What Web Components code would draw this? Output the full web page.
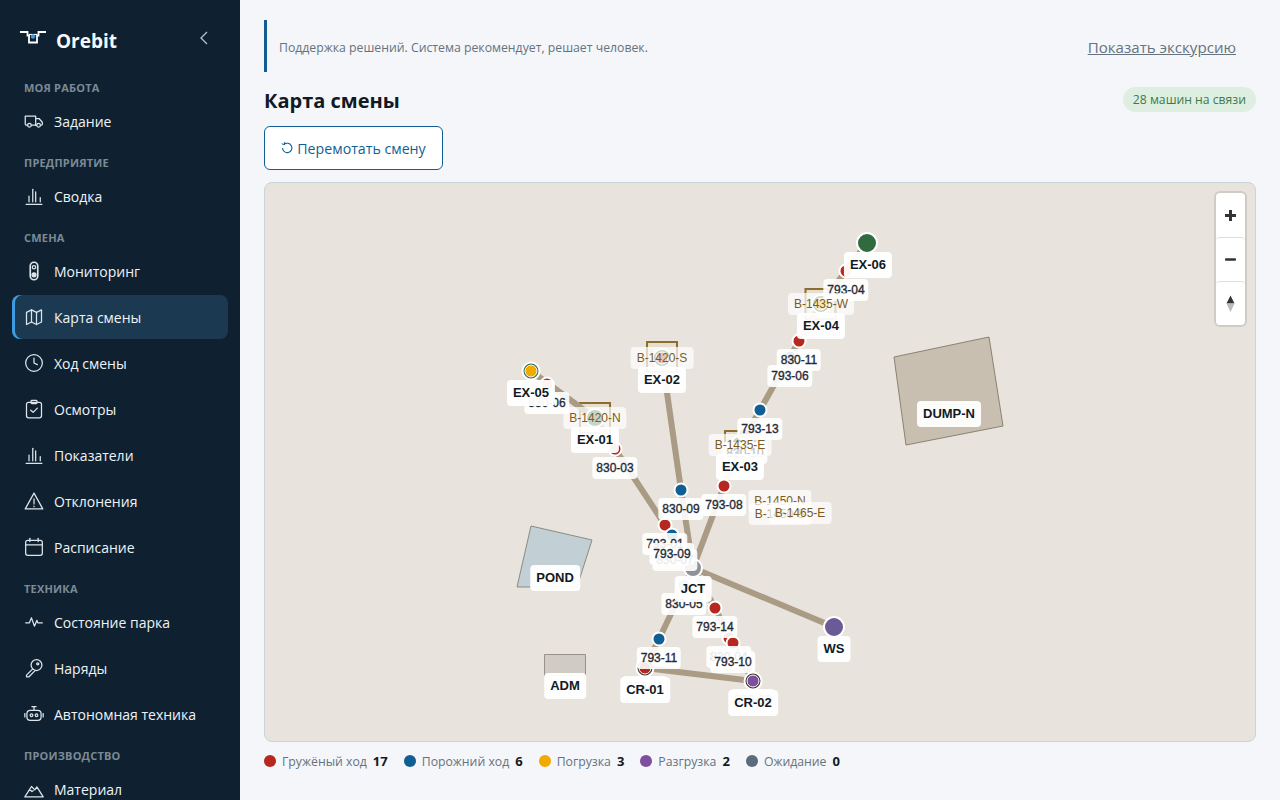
<!DOCTYPE html>
<html lang="ru">
<head>
<meta charset="utf-8">
<title>Карта смены</title>
<style>
html, body { margin: 0; height: 100%; overflow: hidden; }
body { font-family: "Open Sans", "Noto Sans", sans-serif; background: #f4f6f9; }
</style>
</head>
<body>
<shift-app>
  <app-sidebar slot="sidebar">
    <nav-section label="Моя работа"></nav-section>
    <nav-item icon="truck">Задание</nav-item>
    <nav-section label="Предприятие"></nav-section>
    <nav-item icon="chart">Сводка</nav-item>
    <nav-section label="Смена"></nav-section>
    <nav-item icon="monitor">Мониторинг</nav-item>
    <nav-item icon="map" active>Карта смены</nav-item>
    <nav-item icon="clock">Ход смены</nav-item>
    <nav-item icon="clipboard">Осмотры</nav-item>
    <nav-item icon="chart">Показатели</nav-item>
    <nav-item icon="warning">Отклонения</nav-item>
    <nav-item icon="calendar">Расписание</nav-item>
    <nav-section label="Техника"></nav-section>
    <nav-item icon="activity">Состояние парка</nav-item>
    <nav-item icon="key">Наряды</nav-item>
    <nav-item icon="robot">Автономная техника</nav-item>
    <nav-section label="Производство"></nav-section>
    <nav-item icon="mountain">Материал</nav-item>
  </app-sidebar>

  <info-banner>
    Поддержка решений. Система рекомендует, решает человек.
    <a slot="action" href="#">Показать экскурсию</a>
  </info-banner>
  <page-header badge="28 машин на связи">Карта смены</page-header>
  <rewind-button>Перемотать смену</rewind-button>
  <shift-map></shift-map>
  <map-legend>
    <legend-item color="#b5271f" count="17">Гружёный ход</legend-item>
    <legend-item color="#0f5f95" count="6">Порожний ход</legend-item>
    <legend-item color="#f2a900" count="3">Погрузка</legend-item>
    <legend-item color="#7d4f9e" count="2">Разгрузка</legend-item>
    <legend-item color="#5b6b7b" count="0">Ожидание</legend-item>
  </map-legend>
</shift-app>

<script>
const ICONS = {
  truck: '<path d="M4.5 17H3a1.5 1.5 0 0 1-1.5-1.5V6h12.5v11"/><path d="M9 17h6"/><path d="M14 9h4l4 4.5V16a1 1 0 0 1-1 1h-.5"/><circle cx="6.5" cy="17" r="2.2"/><circle cx="17.5" cy="17" r="2.2"/>',
  chart: '<path d="M2.5 22h19"/><path d="M6 19v-7"/><path d="M10.5 19V4"/><path d="M14 19V7"/><path d="M19.5 19v-5"/>',
  monitor: '<rect x="7.5" y="1.5" width="9" height="21" rx="4.5" stroke-width="2"/><circle cx="12" cy="7.5" r="2"/><circle cx="12" cy="16.5" r="2.4" fill="currentColor"/>',
  map: '<path d="M9 3.5 3 6.5V21l6-3 6 3 6-3V3.500l-6 3z"/><path d="M9 3.500V18"/><path d="M15 6.500V21"/>',
  clock: '<circle cx="12" cy="12" r="10"/><path d="M12 6v6l4 2"/>',
  clipboard: '<rect x="3" y="4" width="18" height="18.500" rx="2.500"/><rect x="8.500" y="1.500" width="7" height="4" rx="1"/><path d="m8 13.500 3 2.500 5-5"/>',
  warning: '<path d="M12 2.500 1.500 21.500h21z"/><path d="M12 9.500v6"/><path d="M12 18v.8"/>',
  calendar: '<rect x="2" y="4" width="20" height="18" rx="2.500"/><path d="M2 9.500h20"/><path d="M7 1.500v4"/><path d="M17 1.500v4"/>',
  activity: '<path d="M2 13h4.500l2.500-6 3.500 10 3-7 1 3h5.500"/>',
  key: '<circle cx="15" cy="8.500" r="6.500"/><circle cx="16.500" cy="7" r="1.300"/><path d="M10.500 13 3 20.500V22.500h3L13 15.500"/>',
  robot: '<rect x="3.500" y="7.500" width="17" height="12" rx="4"/><circle cx="9" cy="13.500" r="1.600"/><circle cx="15" cy="13.500" r="1.600"/><path d="M12 7.500V3.500"/><path d="M9.500 3h5"/><path d="M1 11.500v4"/><path d="M23 11.500v4"/>',
  mountain: '<path d="M1 21.500 9 9l4 4 2.500-3.500 7.500 12z"/><path d="M6 13.500h2l1.500 1.500 1.500-1"/>'
};

const appTemplate = document.createElement('template');
appTemplate.innerHTML = `
<style>
:host { display: flex; height: 800px; overflow: hidden; }
main { flex: 1; min-width: 0; padding: 20px 24px 0; display: flex; flex-direction: column; align-items: stretch; }
</style>
<slot name="sidebar"></slot>
<main><slot></slot></main>
`;
class ShiftApp extends HTMLElement {
  constructor() {
    super();
    this.attachShadow({ mode: 'open' });
    this.shadowRoot.appendChild(appTemplate.content.cloneNode(true));
  }
}
customElements.define('shift-app', ShiftApp);

const sidebarTemplate = document.createElement('template');
sidebarTemplate.innerHTML = `
<style>
:host { display: block; flex: 0 0 240px; width: 240px; height: 800px; background: #0f2130; overflow: hidden; color: #fff; }
header { height: 70px; box-sizing: border-box; position: relative; display: flex; align-items: flex-start; padding: 30px 30px 0 20px; }
.logo { width: 26px; height: 14px; margin-right: 10px; }
.name { font-size: 19px; line-height: 22px; font-weight: 700; color: #f4f8fb; flex: 1; }
.chev { width: 12px; height: 14px; margin: 1px 0 0; color: #b6c2cc; }
nav { padding: 0 12px; }
</style>
<header>
  <svg class="logo" viewBox="0 0 26 14" fill="none" stroke="#fff" stroke-width="1.800">
    <path d="M0 2h7.500v3.500h1.500V12.500h8V5.500h1.500V2H26"/>
    <path d="M9 4.500h8" stroke-width="1.200"/>
    <circle cx="13" cy="6.500" r="2.200" fill="#3f9be0" stroke="none"/>
  </svg>
  <span class="name">Orebit</span>
  <svg class="chev" viewBox="0 0 12 14" fill="none" stroke="currentColor" stroke-width="1.300"><path d="M9 1 3 7l6 6"/></svg>
</header>
<nav><slot></slot></nav>
`;
class AppSidebar extends HTMLElement {
  constructor() {
    super();
    this.attachShadow({ mode: 'open' });
    this.shadowRoot.appendChild(sidebarTemplate.content.cloneNode(true));
  }
}
customElements.define('app-sidebar', AppSidebar);

class NavSection extends HTMLElement {
  constructor() {
    super();
    this.attachShadow({ mode: 'open' });
    this.shadowRoot.innerHTML = `
<style>
:host { display: block; height: 29px; box-sizing: border-box; padding: 11px 12px 0; font-size: 11px; line-height: 14px; font-weight: 700; letter-spacing: .2px; text-transform: uppercase; color: #7b8a97; }
</style>
<span></span>`;
  }
  connectedCallback() {
    this.shadowRoot.querySelector('span').textContent = this.getAttribute('label');
  }
}
customElements.define('nav-section', NavSection);

class NavItem extends HTMLElement {
  constructor() {
    super();
    this.attachShadow({ mode: 'open' });
    this.shadowRoot.innerHTML = `
<style>
:host { display: flex; align-items: center; height: 44px; margin-bottom: 2px; box-sizing: border-box; padding: 0 12px; gap: 10px; font-size: 14px; color: #eef3f7; border-radius: 8px; }
:host([active]) { background: #1b3a52; box-shadow: inset 3px 0 0 #3f9be0; }
svg { width: 20px; height: 20px; flex: none; fill: none; stroke: currentColor; stroke-width: 1.5; stroke-linecap: round; stroke-linejoin: round; color: #dde5eb; }
</style>
<svg viewBox="0 0 24 24"></svg><slot></slot>`;
  }
  connectedCallback() {
    this.shadowRoot.querySelector('svg').innerHTML = ICONS[this.getAttribute('icon')] || '';
  }
}
customElements.define('nav-item', NavItem);

class InfoBanner extends HTMLElement {
  constructor() {
    super();
    this.attachShadow({ mode: 'open' });
    this.shadowRoot.innerHTML = `
<style>
:host { display: flex; align-items: center; justify-content: space-between; height: 52px; box-sizing: border-box; padding: 2px 20px 0 12px; border-left: 3px solid #0f5f95; font-size: 12.250px; color: #66727e; }
::slotted(a) { font-size: 15.100px; color: #66727e; text-decoration: underline; }
</style>
<span><slot></slot></span><slot name="action"></slot>`;
  }
}
customElements.define('info-banner', InfoBanner);

class PageHeader extends HTMLElement {
  constructor() {
    super();
    this.attachShadow({ mode: 'open' });
    this.shadowRoot.innerHTML = `
<style>
:host { display: flex; align-items: center; justify-content: space-between; height: 54px; box-sizing: border-box; padding-top: 3px; }
h1 { margin: 0; font-size: 20px; line-height: 28px; font-weight: 700; color: #111a24; }
.badge { font-size: 12.200px; line-height: 25px; height: 25px; padding: 0 10px; border-radius: 13px; background: #deefe2; color: #3b7a4b; margin-top: -2px; }
</style>
<h1><slot></slot></h1><span class="badge"></span>`;
  }
  connectedCallback() {
    this.shadowRoot.querySelector('.badge').textContent = this.getAttribute('badge');
  }
}
customElements.define('page-header', PageHeader);

class RewindButton extends HTMLElement {
  constructor() {
    super();
    this.attachShadow({ mode: 'open' });
    this.shadowRoot.innerHTML = `
<style>
:host { display: block; align-self: flex-start; margin-bottom: 12px; }
button { display: flex; align-items: center; justify-content: center; gap: 4px; height: 44px; width: 179px; box-sizing: border-box; padding: 0; background: #fff; border: 1px solid #0f5f95; border-radius: 6px; color: #0f5f95; font: 14.200px "Open Sans", sans-serif; }
svg { width: 12px; height: 12px; fill: none; stroke: currentColor; stroke-width: 1.100; }
</style>
<button><svg viewBox="0 0 12 12"><path d="M3 2.500a4.700 4.700 0 1 1-1.500 3.500"/><path d="M.8 1.800 3.400 2.600 3.800 0" stroke-width="1"/></svg><slot></slot></button>`;
  }
}
customElements.define('rewind-button', RewindButton);

class MapLabel extends HTMLElement {
  constructor() {
    super();
    this.attachShadow({ mode: 'open' });
    this.shadowRoot.innerHTML = `
<style>
:host { position: absolute; transform: translate(-50%, -50%); white-space: nowrap; font-family: "Liberation Sans", Arial, sans-serif; border-radius: 4px; }
:host([kind="machine"]) { font-size: 12px; line-height: 14px; padding: 4px; background: rgba(255,255,255,.9); color: #1f2a37; -webkit-text-stroke: .35px #1f2a37; }
:host([kind="zone"]) { font-size: 12px; line-height: 14px; padding: 4px 6px; background: rgba(255,255,255,.72); color: #7a5c1e; }
:host([kind="station"]) { font-size: 13px; line-height: 16px; font-weight: 700; padding: 5px 6px; background: rgba(255,255,255,.95); color: #111a24; }
</style>
<slot></slot>`;
  }
}
customElements.define('map-label', MapLabel);

class MapControls extends HTMLElement {
  constructor() {
    super();
    this.attachShadow({ mode: 'open' });
    this.shadowRoot.innerHTML = `
<style>
:host { position: absolute; top: 10px; right: 10px; width: 29px; background: #fff; border-radius: 4px; box-shadow: 0 0 0 2px rgba(0,0,0,.1); display: flex; flex-direction: column; }
div { height: 44px; display: flex; align-items: center; justify-content: center; border-radius: 4px; }
div + div { border-top: 1px solid #ddd; box-sizing: border-box; }
svg { width: 29px; height: 29px; }
</style>
<div><svg viewBox="0 0 29 29"><path d="M13 9h3v4h4v3h-4v4h-3v-4H9v-3h4z" fill="#333"/></svg></div>
<div><svg viewBox="0 0 29 29"><rect x="9" y="13.200" width="11" height="2.600" rx=".8" fill="#333"/></svg></div>
<div><svg viewBox="0 0 29 29"><path d="M14.500 6.500 18.500 14.500H10.500z" fill="#333"/><path d="M14.500 23 18.500 14.500H10.500z" fill="#bbb"/></svg></div>`;
  }
}
customElements.define('map-controls', MapControls);

// map items are in screen coordinates of the reference, shifted by the map origin below
const ORIGIN = { x: 265, y: 183 };
const ROADS = [
  [[531,371],[595,418],[615,449],[665,525],[693,568]],
  [[662,358],[681,490],[693,568]],
  [[867,243],[821,304],[799,341],[760,410],[740,445],[724,486],[693,568]],
  [[693,568],[834,627]],
  [[693,568],[659,639],[645,668]],
  [[693,568],[715,608],[732,643],[753,681]],
  [[645,668],[753,681]]
];
const AREAS = [
  { points: '894,357 989,337 1003,426 906,445', fill: '#c8bfb0', stroke: '#8a8274' },
  { points: '531,526 592,540 577,587 517,587', fill: '#c2d0d6', stroke: '#8b8b85' },
  { points: '544.500,654.500 585.500,654.500 585.500,676 544.500,676', fill: '#d0cbc4', stroke: '#98928a' }
];
const ZONES = [[595,418],[662,357],[820.500,304],[740,446]];
// [x, y, radius, fill]
const GREEN = '#2f6b3f', DARK = '#3b302a';
const STATIONS = [
  [531,371,8.500,GREEN], [595,418,9,GREEN], [662,358,9,GREEN], [821,304,9,GREEN], [740,445,9,GREEN],
  [867,243,10,GREEN], [834,627,10,'#6a5a96'], [693,568,9,'#8e9196'], [645,668,8.500,DARK], [753,681,8.500,DARK]
];
const RED = '#b5271f', BLUE = '#0f5f95', AMBER = '#f2a900', PURPLE = '#7d4f9e';
const MACHINES = [
  ['830-11',799,341,RED], ['830-10',745,434,RED], ['830-09',681,490,BLUE], ['830-07',675,541,RED],
  ['830-06',547,384,RED], ['830-05',684,585,BLUE], ['830-04',729,638,RED], ['830-03',615,449,RED],
  ['830-01',645,668,RED], ['830-02',753,681,PURPLE], ['830-08',662,358,RED], ['830-12',821,304,AMBER],
  ['830-13',531,371,AMBER],
  ['793-04',846,271,RED], ['793-06',790,357,BLUE], ['793-13',760,410,BLUE], ['793-08',724,486,RED],
  ['793-01',665,525,RED], ['793-09',672,535,BLUE], ['793-14',715,608,RED], ['793-11',659,639,BLUE],
  ['793-10',733,643,RED]
];
// machines that stand on a station marker: thin white edge, no label of their own in the picture
const ON_STATION = ['830-01', '830-02', '830-08', '830-12', '830-13'];
const HIDDEN_LABELS = ['830-08', '830-12', '830-13'];
const ZONE_LABELS = [
  ['B-1420-N',595,418], ['B-1420-S',662,358], ['B-1435-E',740,445], ['B-1450-N',780,501],
  ['B-1450-S',780,514], ['B-1435-W',821,304], ['B-1465-E',800,513]
];
const STATION_LABELS = [
  ['EX-06',868,265], ['EX-04',821,326], ['EX-02',662,380], ['EX-05',531,393], ['EX-01',595,440], ['EX-03',740,467],
  ['DUMP-N',949,414], ['POND',555,578], ['ADM',565,686], ['JCT',693,589], ['WS',834,649], ['CR-01',645,690], ['CR-02',753,703]
];

class ShiftMap extends HTMLElement {
  constructor() {
    super();
    this.attachShadow({ mode: 'open' });
    const shift = ([x, y]) => `${x - ORIGIN.x},${y - ORIGIN.y}`;
    const circle = (x, y, r, fill, w = 2) => `<circle cx="${x - ORIGIN.x}" cy="${y - ORIGIN.y}" r="${r}" fill="${fill}" stroke="#fff" stroke-width="${w}"/>`;
    const areas = AREAS.map(a => {
      const pts = a.points.split(' ').map(p => shift(p.split(',').map(Number))).join(' ');
      return `<polygon points="${pts}" fill="${a.fill}" stroke="${a.stroke}"/>`;
    }).join('');
    const roads = ROADS.map(r => `<polyline points="${r.map(shift).join(' ')}" fill="none" stroke="#a99b84" stroke-width="6"/>`).join('');
    const zones = ZONES.map(([x, y]) => `<rect x="${x - 15 - ORIGIN.x}" y="${y - 15 - ORIGIN.y}" width="30" height="30" fill="#e3dcc9" fill-opacity=".6" stroke="#8a6d2f" stroke-width="2"/>`).join('');
    const stations = STATIONS.map(([x, y, r, fill]) => circle(x, y, r, fill)).join('');
    const dots = MACHINES.map(([id, x, y, fill]) => ON_STATION.includes(id) ? circle(x, y, 6, fill, 1) : circle(x, y, 6.5, fill)).join('');
    const label = (kind, [text, x, y]) => `<map-label kind="${kind}" style="left:${x - ORIGIN.x}px;top:${y - ORIGIN.y}px">${text}</map-label>`;
    const labels = [
      ...MACHINES.filter(m => !HIDDEN_LABELS.includes(m[0])).map(m => label('machine', [m[0], m[1], m[2] + 19])),
      ...ZONE_LABELS.map(z => label('zone', z)),
      ...STATION_LABELS.map(s => label('station', s))
    ].join('');
    this.shadowRoot.innerHTML = `
<style>
:host { display: block; position: relative; height: 560px; box-sizing: border-box; background: #e8e3dc; border: 1px solid #c9d3dc; border-radius: 8px; overflow: hidden; }
svg { position: absolute; left: 0; top: 0; width: 990px; height: 558px; }
</style>
<svg viewBox="0 0 990 558">${areas}${zones}${roads}${stations}${dots}</svg>
${labels}
<map-controls></map-controls>`;
  }
}
customElements.define('shift-map', ShiftMap);

class MapLegend extends HTMLElement {
  constructor() {
    super();
    this.attachShadow({ mode: 'open' });
    this.shadowRoot.innerHTML = `
<style>
:host { display: flex; gap: 16px; height: 38px; align-items: center; }
</style>
<slot></slot>`;
  }
}
customElements.define('map-legend', MapLegend);

class LegendItem extends HTMLElement {
  constructor() {
    super();
    this.attachShadow({ mode: 'open' });
    this.shadowRoot.innerHTML = `
<style>
:host { display: flex; align-items: center; font-size: 12.250px; color: #66727e; }
i { width: 12px; height: 12px; border-radius: 50%; margin-right: 6px; }
b { margin-left: 6px; color: #111a24; font-weight: 700; font-size: 13px; }
</style>
<i></i><slot></slot><b></b>`;
  }
  connectedCallback() {
    this.shadowRoot.querySelector('i').style.background = this.getAttribute('color');
    this.shadowRoot.querySelector('b').textContent = this.getAttribute('count');
  }
}
customElements.define('legend-item', LegendItem);
</script>
</body>
</html>
